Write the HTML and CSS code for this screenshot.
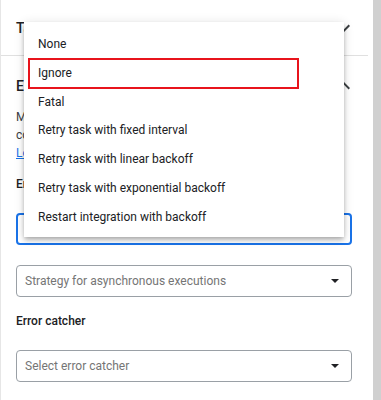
FILE: index.html
```html
<!DOCTYPE html>
<html lang="en">
<head>
    <meta charset="UTF-8">
    <meta name="viewport" content="width=device-width, initial-scale=1.0">
    <title>Task configuration</title>
    <link rel="stylesheet" href="styles.css">
</head>
<body>
    <div class="page">
        <div class="panel">
            <div class="section-header collapsed">
                <span>Task input</span>
                <svg class="chevron" viewBox="0 0 24 24"><path d="M16.59 8.59L12 13.17 7.41 8.59 6 10l6 6 6-6z"/></svg>
            </div>

            <div class="section">
                <div class="section-title">
                    <span>Error handling</span>
                    <svg class="chevron" viewBox="0 0 24 24"><path d="M12 8l-6 6 1.41 1.41L12 10.83l4.59 4.58L18 14z"/></svg>
                </div>
                <p class="description">
                    Modify the error handling behaviour of the task<br>
                    configured in this integration.<br>
                    <a href="#">Learn more</a>
                </p>

                <div class="field-label first">Error handling strategy</div>
                <div class="select focused">
                    <span class="value">Strategy for synchronous executions</span>
                    <span class="arrow"></span>
                </div>

                <div class="select">
                    <span class="placeholder">Strategy for asynchronous executions</span>
                    <span class="arrow"></span>
                </div>

                <div class="field-label">Error catcher</div>
                <div class="select">
                    <span class="placeholder">Select error catcher</span>
                    <span class="arrow"></span>
                </div>
            </div>
        </div>
        <div class="scrollbar"></div>

        <!-- open dropdown of the focused select -->
        <ul class="menu">
            <li>None</li>
            <li class="highlighted">Ignore</li>
            <li>Fatal</li>
            <li>Retry task with fixed interval</li>
            <li>Retry task with linear backoff</li>
            <li>Retry task with exponential backoff</li>
            <li>Restart integration with backoff</li>
        </ul>
    </div>
</body>
</html>
```

FILE: styles.css
```css
body {
    margin: 0;
    padding: 0;
    background-color: #fff;
    font-family: Roboto, "Liberation Sans", Arial, sans-serif;
    color: #202124;
}

.page {
    position: relative;
    display: flex;
    height: 400px;
    overflow: hidden;
}

.panel {
    width: 367px;
    border-left: 1px solid #e6e6e6;
}

.scrollbar {
    width: 8px;
    margin-left: 5px;
    background-color: #d0d0d0;
}

.section-header {
    display: flex;
    align-items: center;
    justify-content: space-between;
    height: 55px;
    padding: 0 12px 0 15px;
    border-bottom: 1px solid #e0e0e0;
    font-size: 14px;
    font-weight: 500;
}

.chevron {
    width: 24px;
    height: 24px;
    fill: #3c4043;
}

.section {
    padding: 16px 16px 0 15px;
}

.section-title {
    display: flex;
    align-items: center;
    justify-content: space-between;
    height: 28px;
    margin-right: -4px;
    font-size: 14px;
    font-weight: 500;
}

.description {
    margin: 8px 0 0;
    font-size: 12px;
    line-height: 18px;
    color: #3c4043;
}

.description a {
    color: #1a73e8;
}

.field-label {
    margin-top: 15px;
    font-size: 12px;
    font-weight: 500;
    line-height: 18px;
}

.field-label.first {
    margin-top: 13px;
}

.select {
    display: flex;
    align-items: center;
    justify-content: space-between;
    height: 32px;
    margin-top: 20px;
    padding: 0 12px 0 8px;
    border: 1px solid #9aa0a6;
    border-radius: 4px;
    box-sizing: border-box;
    font-size: 12px;
}

.select.focused {
    border: 2px solid #1a73e8;
    padding: 0 11px 0 7px;
}

.select .placeholder,
.select .value {
    color: #757575;
}

.arrow {
    width: 0;
    height: 0;
    border-left: 4px solid transparent;
    border-right: 4px solid transparent;
    border-top: 4px solid #202124;
}

.menu {
    position: absolute;
    left: 24px;
    top: 22px;
    width: 320px;
    margin: 0;
    padding: 8px 0 6px;
    list-style: none;
    background-color: #fff;
    box-shadow: 0 2px 4px -1px rgba(0, 0, 0, 0.2), 0 4px 5px 0 rgba(0, 0, 0, 0.14), 0 1px 10px 0 rgba(0, 0, 0, 0.12);
}

.menu li {
    position: relative;
    height: 28.75px;
    line-height: 28.75px;
    padding-left: 14px;
    font-size: 12px;
    color: #202124;
}

/* red marker drawn around the chosen option */
.menu li.highlighted::after {
    content: "";
    position: absolute;
    left: 4px;
    top: -0.75px;
    width: 267px;
    height: 27px;
    border: 2px solid #e8141c;
}
```
